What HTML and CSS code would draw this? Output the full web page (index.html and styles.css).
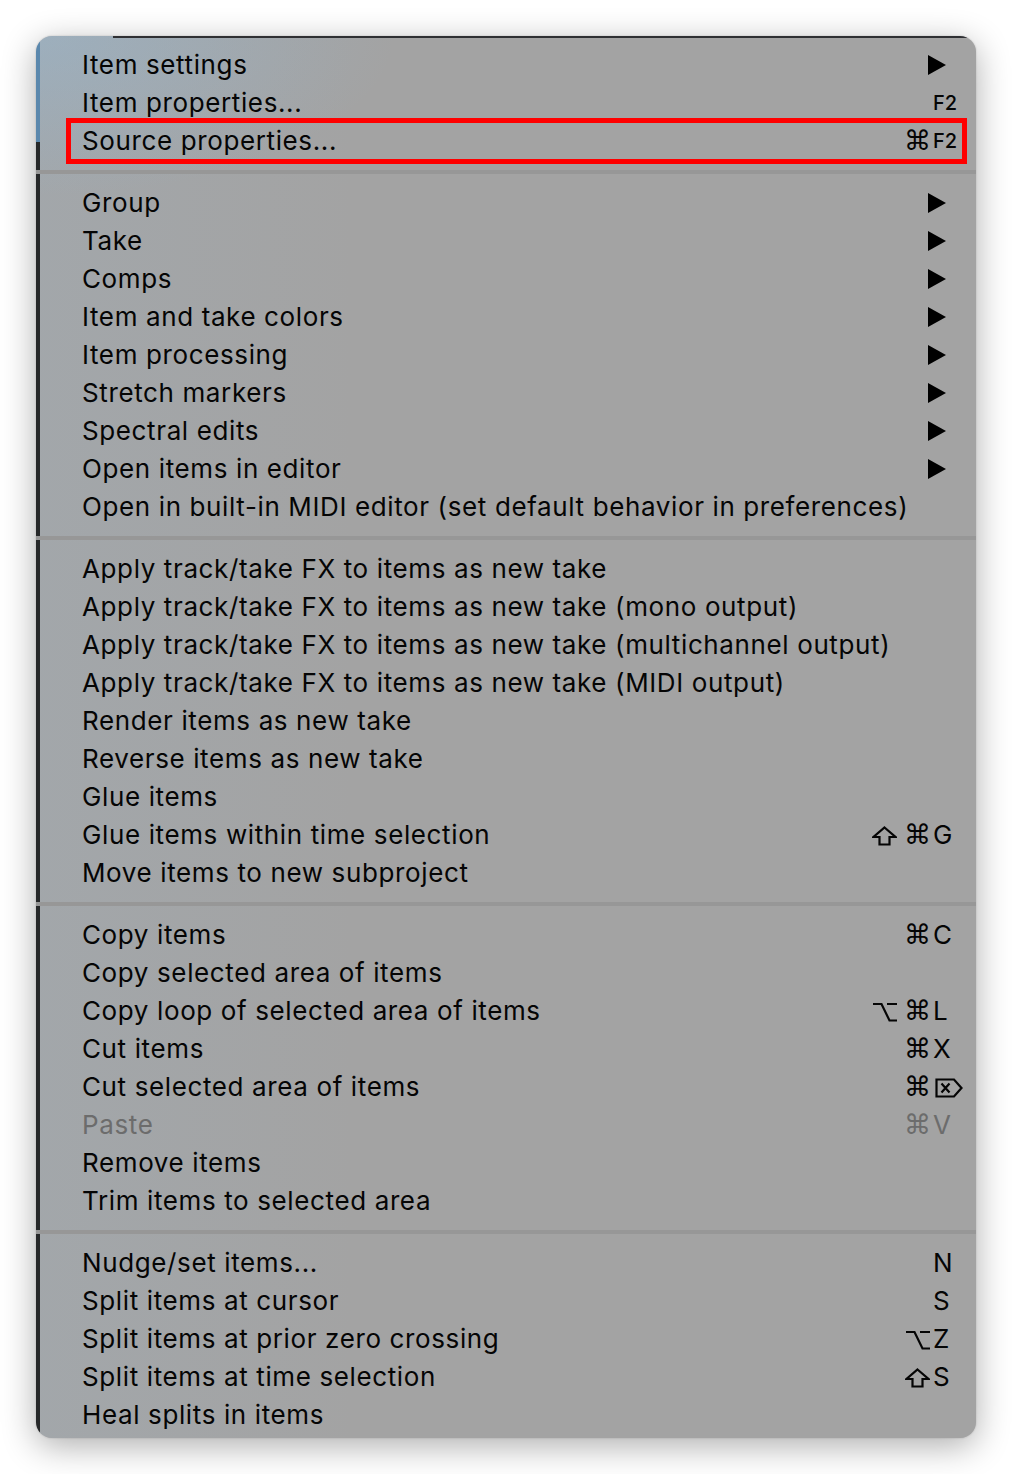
FILE: index.html
```html
<!DOCTYPE html>
<html>
<head>
<meta charset="utf-8">
<link rel="stylesheet" href="styles.css">
</head>
<body>
<div class="menu">
  <div class="group">
    <div class="item"><span class="label">Item settings</span><svg class="arrow" viewBox="0 0 18 20"><polygon points="0,0 18,10 0,20"/></svg></div>
    <div class="item"><span class="label">Item properties...</span><span class="mods"></span><span class="key fkey">F2</span></div>
    <div class="item marked"><span class="label">Source properties...</span><span class="mods"><span class="cmd">⌘</span></span><span class="key fkey">F2</span></div>
  </div>
  <div class="sep"></div>
  <div class="group">
    <div class="item"><span class="label">Group</span><svg class="arrow" viewBox="0 0 18 20"><polygon points="0,0 18,10 0,20"/></svg></div>
    <div class="item"><span class="label">Take</span><svg class="arrow" viewBox="0 0 18 20"><polygon points="0,0 18,10 0,20"/></svg></div>
    <div class="item"><span class="label">Comps</span><svg class="arrow" viewBox="0 0 18 20"><polygon points="0,0 18,10 0,20"/></svg></div>
    <div class="item"><span class="label">Item and take colors</span><svg class="arrow" viewBox="0 0 18 20"><polygon points="0,0 18,10 0,20"/></svg></div>
    <div class="item"><span class="label">Item processing</span><svg class="arrow" viewBox="0 0 18 20"><polygon points="0,0 18,10 0,20"/></svg></div>
    <div class="item"><span class="label">Stretch markers</span><svg class="arrow" viewBox="0 0 18 20"><polygon points="0,0 18,10 0,20"/></svg></div>
    <div class="item"><span class="label">Spectral edits</span><svg class="arrow" viewBox="0 0 18 20"><polygon points="0,0 18,10 0,20"/></svg></div>
    <div class="item"><span class="label">Open items in editor</span><svg class="arrow" viewBox="0 0 18 20"><polygon points="0,0 18,10 0,20"/></svg></div>
    <div class="item"><span class="label">Open in built-in MIDI editor (set default behavior in preferences)</span></div>
  </div>
  <div class="sep"></div>
  <div class="group">
    <div class="item"><span class="label">Apply track/take FX to items as new take</span></div>
    <div class="item"><span class="label">Apply track/take FX to items as new take (mono output)</span></div>
    <div class="item"><span class="label">Apply track/take FX to items as new take (multichannel output)</span></div>
    <div class="item"><span class="label">Apply track/take FX to items as new take (MIDI output)</span></div>
    <div class="item"><span class="label">Render items as new take</span></div>
    <div class="item"><span class="label">Reverse items as new take</span></div>
    <div class="item"><span class="label">Glue items</span></div>
    <div class="item"><span class="label">Glue items within time selection</span><span class="mods"><svg class="glyph shift" viewBox="0 0 25 20"><path d="M12.5 1.5 L23.5 11 H17.5 V18.5 H7.5 V11 H1.5 Z"/></svg><span class="cmd">⌘</span></span><span class="key">G</span></div>
    <div class="item"><span class="label">Move items to new subproject</span></div>
  </div>
  <div class="sep"></div>
  <div class="group">
    <div class="item"><span class="label">Copy items</span><span class="mods"><span class="cmd">⌘</span></span><span class="key">C</span></div>
    <div class="item"><span class="label">Copy selected area of items</span></div>
    <div class="item"><span class="label">Copy loop of selected area of items</span><span class="mods"><svg class="glyph opt" viewBox="0 0 24 20"><path d="M0 2 H8.5 L16.5 18.5 H24 M14 2 H24"/></svg><span class="cmd">⌘</span></span><span class="key">L</span></div>
    <div class="item"><span class="label">Cut items</span><span class="mods"><span class="cmd">⌘</span></span><span class="key">X</span></div>
    <div class="item"><span class="label">Cut selected area of items</span><span class="mods"><span class="cmd">⌘</span></span><span class="key keyicon"><svg class="glyph del" viewBox="0 0 28 20"><path d="M1.5 1.5 H19 L26.5 10 L19 18.5 H1.5 Z M6.5 5.5 L14.5 14.5 M14.5 5.5 L6.5 14.5"/></svg></span></div>
    <div class="item disabled"><span class="label">Paste</span><span class="mods"><span class="cmd">⌘</span></span><span class="key">V</span></div>
    <div class="item"><span class="label">Remove items</span></div>
    <div class="item"><span class="label">Trim items to selected area</span></div>
  </div>
  <div class="sep"></div>
  <div class="group">
    <div class="item"><span class="label">Nudge/set items...</span><span class="mods"></span><span class="key">N</span></div>
    <div class="item"><span class="label">Split items at cursor</span><span class="mods"></span><span class="key">S</span></div>
    <div class="item"><span class="label">Split items at prior zero crossing</span><span class="mods"><svg class="glyph opt" viewBox="0 0 24 20"><path d="M0 2 H8.5 L16.5 18.5 H24 M14 2 H24"/></svg></span><span class="key">Z</span></div>
    <div class="item"><span class="label">Split items at time selection</span><span class="mods"><svg class="glyph shift" viewBox="0 0 25 20"><path d="M12.5 1.5 L23.5 11 H17.5 V18.5 H7.5 V11 H1.5 Z"/></svg></span><span class="key">S</span></div>
    <div class="item"><span class="label">Heal splits in items</span></div>
  </div>
</div>
</body>
</html>
```

FILE: styles.css
```css
html, body {
  margin: 0;
  padding: 0;
  background: #ffffff;
}

body {
  padding: 36px 0 36px 36px;
}

.menu {
  width: 940px;
  box-sizing: border-box;
  padding: 10px 0 4px 0;
  border-radius: 16px;
  font-family: Inter, "Noto Sans", sans-serif;
  font-size: 26px;
  letter-spacing: 0.62px;
  color: #050505;
  background:
    linear-gradient(#5b88ad, #5b88ad) 0 0 / 4px 106px no-repeat,
    linear-gradient(#262829, #262829) 0 106px / 4px 100% no-repeat,
    linear-gradient(#2f3033, #2f3033) 77px 0 / 100% 2px no-repeat,
    radial-gradient(ellipse 360px 160px at 0 0, rgba(150, 185, 212, 0.45), rgba(150, 185, 212, 0) 100%),
    linear-gradient(to right, rgba(160, 180, 196, 0.22), rgba(160, 180, 196, 0) 320px),
    #a3a3a3;
  box-shadow: 0 8px 34px rgba(0, 0, 0, 0.32), 0 0 2px rgba(0, 0, 0, 0.2);
}

.item {
  position: relative;
  display: grid;
  grid-template-columns: 1fr 90px 34px;
  align-items: center;
  height: 38px;
  line-height: 38px;
  padding: 0 10px 0 46px;
  white-space: nowrap;
}

.label {
  grid-column: 1;
}

.mods {
  grid-column: 2;
  display: flex;
  justify-content: flex-end;
  align-items: center;
  gap: 7px;
  height: 38px;
  padding-right: 2px;
  letter-spacing: 0;
}

.cmd {
  font-family: "DejaVu Sans", sans-serif;
  font-size: 27px;
  line-height: 38px;
  margin-right: -1px;
}

.glyph {
  fill: none;
  stroke: currentColor;
  stroke-width: 2.2;
  stroke-linejoin: miter;
}

.shift {
  width: 25px;
  height: 20px;
  margin-top: 1px;
}

.opt {
  width: 24px;
  height: 20px;
  margin-top: 1px;
}

.key {
  grid-column: 3;
  padding-left: 1px;
  letter-spacing: 0;
}

.keyicon {
  display: flex;
  align-items: center;
  height: 38px;
  padding-left: 3px;
}

.del {
  width: 28px;
  height: 20px;
  flex: none;
  margin-top: 1px;
}

.key.fkey {
  font-size: 20px;
  font-weight: 500;
}

.arrow {
  grid-column: 2 / 4;
  justify-self: end;
  width: 18px;
  height: 20px;
  margin-right: 20px;
  fill: #000;
}

.disabled {
  color: #6c6c6c;
}

.sep {
  height: 4px;
  margin: 10px 0;
  background: #979797;
}

.marked::after {
  content: "";
  position: absolute;
  left: 30px;
  right: 9px;
  top: -4px;
  bottom: -4px;
  border: 5px solid #ff0000;
}
```
